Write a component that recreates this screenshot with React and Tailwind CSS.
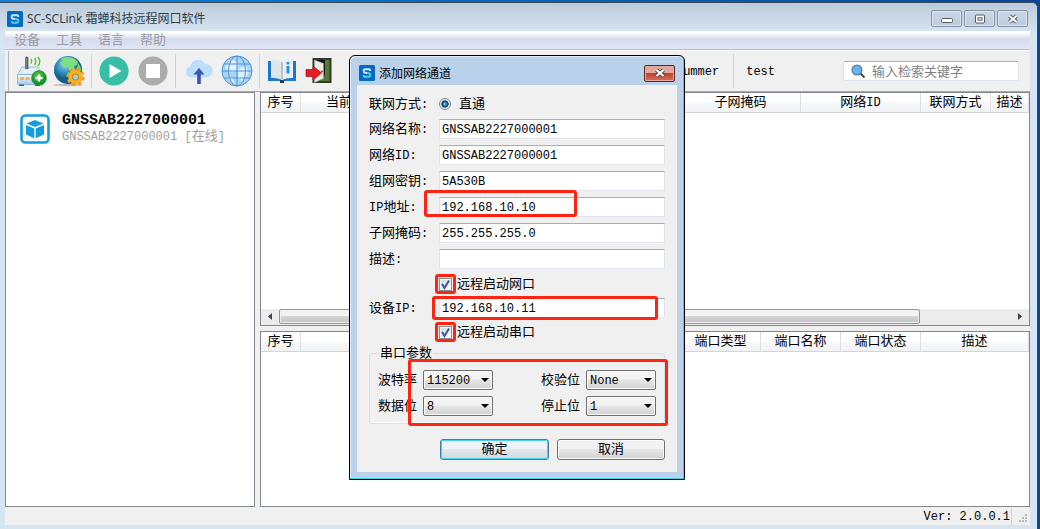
import React from "react";

const Mixed = ({ children }) =>
  String(children)
    .split(/([\x20-\x7e]+)/)
    .filter(Boolean)
    .map((part, i) =>
      /^[\x20-\x7e]+$/.test(part) ? (
        <span key={i} className="text-[12px]">{part}</span>
      ) : (
        part
      )
    );

const AppLogo = () => (
  <svg viewBox="0 0 16 16" className="h-4 w-4 shrink-0" aria-hidden="true">
    <rect width="16" height="16" rx="1.5" fill="#0568c4" />
    <path d="M11.300 6V5.400Q11.300 4.200 10 4.200H6Q4.700 4.200 4.700 5.400v1Q4.700 7.500 6 7.700L8 8" fill="none" stroke="#c9ecfa" strokeWidth="1.900" />
    <path d="M8 8l2 .3q1.300.2 1.300 1.300v1q0 1.200-1.300 1.200H6q-1.300 0-1.300-1.200V10" fill="none" stroke="#56cfdc" strokeWidth="1.900" />
  </svg>
);

const RouterIcon = () => (
  <svg viewBox="0 0 31 32" className="h-8 w-[31px]" aria-hidden="true">
    <defs>
      <linearGradient id="rt" x1="0" y1="0" x2="0" y2="1">
        <stop offset="0" stopColor="#f4f9fe" />
        <stop offset="1" stopColor="#a9c9e9" />
      </linearGradient>
      <radialGradient id="plus" cx=".45" cy=".35">
        <stop offset="0" stopColor="#64cf4b" />
        <stop offset="1" stopColor="#149129" />
      </radialGradient>
    </defs>
    <path d="M6 12h16l4 8H1.5z" fill="#d8e8f6" stroke="#8fb4d8" strokeWidth=".8" />
    <path d="M8 14.5h12M7 17h14" stroke="#fff" strokeWidth="1.2" />
    <path d="M1.5 19.5h25v9q0 1-1 1h-23q-1 0-1-1z" fill="url(#rt)" stroke="#7fa9d2" strokeWidth=".8" />
    <path d="M4 22h4v3H4zM9.5 22h4v3h-4z" fill="#f7b24a" />
    <path d="M3 29.5h5v1.5H3zM19 29.5h5v1.5h-5z" fill="#44678c" />
    <path d="M9 3q0-1.5 1.7-1.5T12.400 3v11H9z" fill="#5c6068" />
    <path d="M10 3v10" stroke="#a3a8ae" strokeWidth=".8" />
    <path d="M15 4q1.400 2 0 4.500M18.500 3q2.500 3.500 0 7M22 2q3.600 4.500 0 9" fill="none" stroke="#55c52d" strokeWidth="1.500" />
    <circle cx="23" cy="23" r="7.300" fill="url(#plus)" stroke="#148a26" strokeWidth=".8" />
    <path d="M23 19.500v7M19.500 23h7" stroke="#fff" strokeWidth="2.400" />
  </svg>
);

const GlobeGearIcon = () => (
  <svg viewBox="0 0 32 32" className="h-8 w-8" aria-hidden="true">
    <defs>
      <radialGradient id="gl" cx=".4" cy=".3">
        <stop offset="0" stopColor="#8fd5f0" />
        <stop offset=".6" stopColor="#328fbd" />
        <stop offset="1" stopColor="#155d8b" />
      </radialGradient>
    </defs>
    <ellipse cx="15" cy="30" rx="15" ry="1.200" fill="#bcbcbc" />
    <circle cx="15" cy="15" r="14" fill="url(#gl)" />
    <path d="M8 4q7-4 14 0l3 3-1 3-3 1 1 4-3 3-3-3-1-3-3 1-4-3-1-3 3-1z" fill="#7fe07f" />
    <path d="M25 8q3 3 3 8l-2 1-2-4zM15 17l4 2-1 3-3-2z" fill="#6fd56f" />
    <circle cx="22.500" cy="22" r="7.600" fill="none" stroke="#f09a10" strokeWidth="3" strokeDasharray="3.200 2.770" />
    <circle cx="22.500" cy="22" r="5.200" fill="none" stroke="#fbb01f" strokeWidth="4" />
    <circle cx="22.500" cy="22" r="3" fill="#a8d2c0" stroke="#d57b05" strokeWidth=".7" />
  </svg>
);

const PlayIcon = () => (
  <svg viewBox="0 0 30 30" className="h-[30px] w-[30px]" aria-hidden="true">
    <circle cx="15" cy="15" r="14.600" fill="#36bea6" />
    <path d="M10.500 8v14L22.500 15z" fill="#fff" />
  </svg>
);

const StopIcon = () => (
  <svg viewBox="0 0 30 30" className="h-[30px] w-[30px]" aria-hidden="true">
    <circle cx="15" cy="15" r="14.600" fill="#acacac" />
    <path d="M8 8h14v14H8z" fill="#fff" />
  </svg>
);

const CloudIcon = () => (
  <svg viewBox="0 0 28 28" className="h-7 w-7" aria-hidden="true">
    <path d="M6 20.500a5.600 5.600 0 0 1-.6-11A8 8 0 0 1 20.500 7.500a5.800 5.800 0 0 1 1.500 13z" fill="#bbdefb" />
    <path d="M14 11l5.500 6.500h-3.700V27h-3.600v-9.500H8.500z" fill="#3f51b5" />
  </svg>
);

const NetIcon = () => (
  <svg viewBox="0 0 32 32" className="h-8 w-8" aria-hidden="true">
    <circle cx="16" cy="16" r="15" fill="#a9d5f5" />
    <path d="M4 11l8-6 6 4-3 7-7 2zM17 14l8-3 3 7-6 8-5-2zM5 22l7 1 2 6z" fill="#dff1fd" />
    <g fill="none" stroke="#4a92d6" strokeWidth="1">
      <circle cx="16" cy="16" r="15" />
      <ellipse cx="16" cy="16" rx="8.500" ry="15" />
      <path d="M16 1v30M1 16h30M3 9h26M3 23h26" />
    </g>
  </svg>
);

const BookIcon = () => (
  <svg viewBox="0 0 30 26" className="h-[26px] w-[30px]" aria-hidden="true">
    <path d="M1 3h3v17h22V3h3v20H17.500q-2.500 2-5 0H1z" fill="#1976d2" />
    <path d="M4.500 1.500Q11 1 15 4v18q-5-2.500-10.500-2z" fill="#dfe6ea" />
    <path d="M25.500 1.500Q19 1 15 4v18q5-2.500 10.500-2z" fill="#eceff1" />
    <path d="M14 4h2v17h-2z" fill="#b9c4ca" />
    <path d="M13 22h4v3h-4z" fill="#263c4e" />
    <path d="M19.500 4h3v2.500h-3zM19.500 8h3v7.500h-3z" fill="#2493e8" />
  </svg>
);

const ExitIcon = () => (
  <svg viewBox="0 0 30 28" className="h-7 w-[30px]" aria-hidden="true">
    <path d="M7.500 1h19v25h-19z" fill="#34382c" />
    <path d="M10 3h14v21H10z" fill="#111" />
    <path d="M20 3h4.500v21H13.500q6-2 6.500-8z" fill="#527b38" />
    <path d="M9.500 3l9 3.500v15l-9 4z" fill="#eceae2" stroke="#aaa" strokeWidth=".6" />
    <circle cx="17" cy="14.500" r="1" fill="#555" />
    <path d="M1 12.500h7V9l8.500 7L8 23v-3.500H1z" fill="#e51c23" stroke="#b40c12" strokeWidth=".7" />
  </svg>
);

const DeviceIcon = () => (
  <svg viewBox="0 0 30 30" className="h-[30px] w-[30px] shrink-0" aria-hidden="true">
    <rect x="1.500" y="1.500" width="27" height="27" rx="4" fill="#fff" stroke="#129edc" strokeWidth="2.600" />
    <path d="M15 6l8.500 3.500L15 13 6.500 9.500z" fill="#129edc" />
    <path d="M6 11l8.300 3.500v9.800L6 20.500zM24 11l-8.300 3.500v9.800L24 20.500z" fill="#129edc" />
  </svg>
);

const SearchIcon = () => (
  <svg viewBox="0 0 15 15" className="h-[15px] w-[15px] shrink-0" aria-hidden="true">
    <path d="M9.500 9.500l4 4" stroke="#37474f" strokeWidth="2" />
    <circle cx="6" cy="6" r="4.900" fill="#64b5f6" stroke="#5c7f99" strokeWidth="1.300" />
  </svg>
);

const ToolButton = ({ label, width, children }) => (
  <button type="button" aria-label={label} className={`flex shrink-0 items-center justify-center ${width}`}>
    {children}
  </button>
);

const Separator = () => <div className="h-[34px] w-px shrink-0 bg-[#cfcfcf]" />;

const WindowButton = ({ label, children }) => (
  <button
    type="button"
    aria-label={label}
    className="flex h-[17px] w-[31px] items-center justify-center rounded-[2px] border border-[#8391a5] bg-linear-to-b from-[#cbd8e6] to-[#bccbdc] shadow-[inset_0_0_0_1px_#dbe6f1]"
  >
    {children}
  </button>
);

const Th = ({ children, align = "text-center" }) => (
  <th className={`h-5 border-r border-b border-[#dcdee2] border-b-[#d5d5d5] bg-linear-to-b from-white from-50% via-[#f7f8fa] via-50% to-[#f1f2f4] px-0 pt-px pb-0 font-normal leading-[18px] whitespace-nowrap ${align}`}>
    <Mixed>{children}</Mixed>
  </th>
);

const RedBox = ({ place }) => (
  <div className={`pointer-events-none absolute rounded-[3px] border-3 border-[#ff2312] ${place}`} />
);

const fieldClass =
  "h-5 w-full rounded-[1px] border border-[#e0e4ec] border-t-[#abadb3] bg-white px-[2px] pt-px text-[12px] leading-[18px] text-black outline-none";

const TextRow = ({ id, label, value, height = "h-[26px]", children }) => (
  <div className={`flex items-center ${height}`}>
    <label htmlFor={id} className="w-[70px] shrink-0 pt-[2px]"><Mixed>{label}</Mixed></label>
    <div className="relative flex flex-1 items-center">
      <input id={id} type="text" defaultValue={value} className={fieldClass} />
      {children}
    </div>
  </div>
);

const CheckRow = ({ id, label, box }) => (
  <div className="flex h-6 items-center pl-[70px]">
    <div className="relative flex h-[13px] w-[13px]">
      <input
        id={id}
        type="checkbox"
        defaultChecked
        className="peer h-[13px] w-[13px] appearance-none border border-[#8e8f8f] bg-linear-to-br from-[#cfd6e2] to-white shadow-[inset_0_0_0_1px_#f4f4f4]"
      />
      <svg viewBox="0 0 13 13" className="pointer-events-none absolute inset-0 hidden h-[13px] w-[13px] peer-checked:block" aria-hidden="true">
        <path d="M3 6l2.500 4L10 2.500" fill="none" stroke="#3a5599" strokeWidth="2" />
      </svg>
      <RedBox place={box} />
    </div>
    <label htmlFor={id} className="pt-px pl-[5px]">{label}</label>
  </div>
);

const SelectField = ({ id, label, options }) => (
  <div className="flex h-5 items-center">
    <label htmlFor={id} className="w-[45px] pt-[2px]">{label}</label>
    <div className="relative flex">
      <select
        id={id}
        className="h-5 w-[70px] appearance-none rounded-[2px] border border-[#707070] bg-linear-to-b from-[#f3f3f3] from-45% via-[#e6e6e6] via-50% to-[#d2d2d2] pt-px pl-[3px] text-[12px] leading-[18px] shadow-[inset_0_0_0_1px_#fafafa] outline-none"
      >
        {options.map((o) => <option key={o}>{o}</option>)}
      </select>
      <svg viewBox="0 0 8 4" className="pointer-events-none absolute top-2 right-1 h-1 w-2" aria-hidden="true">
        <path d="M0 0h8L4 4z" />
      </svg>
    </div>
  </div>
);

const AddChannelDialog = () => (
  <div
    role="dialog"
    aria-label="添加网络通道"
    className="absolute top-[55px] left-[349px] w-[336px] rounded-t-[6px] border border-black bg-[#b9d1ea] px-[7px] pb-[7px] shadow-[inset_-1px_-1px_0_#3fd6ec,inset_1px_1px_0_#e4eef8]"
  >
    <div className="flex h-[29px] items-center pt-[5px] pl-[2px]">
      <AppLogo />
      <div className="pt-px pl-1 font-['Noto_Sans','Noto_Sans_CJK_SC',sans-serif] text-[12px]">添加网络通道</div>
      <button
        type="button"
        aria-label="关闭"
        className="ml-auto mr-[2px] flex h-[17px] w-[31px] items-center justify-center rounded-[2px] border border-[#5b2622] bg-linear-to-b from-[#e0a79c] from-45% via-[#bf4030] via-50% to-[#d4705c] shadow-[inset_0_0_0_1px_#e5a99e]"
      >
        <svg viewBox="0 0 12 10" className="h-[10px] w-3" aria-hidden="true">
          <path d="M2.500 2l7 6M9.500 2l-7 6" stroke="#53413f" strokeWidth="4" />
          <path d="M2.500 2l7 6M9.500 2l-7 6" stroke="#fff" strokeWidth="2.200" />
        </svg>
      </button>
    </div>
    <form className="bg-[#f0f0f0] px-3 pt-[7px] pb-3" onSubmit={(e) => e.preventDefault()}>
      <div className="flex h-6 items-center">
        <div className="w-[70px] pt-[2px]"><Mixed>联网方式:</Mixed></div>
        <input
          id="direct"
          type="radio"
          name="mode"
          defaultChecked
          className="h-3 w-3 appearance-none rounded-full border border-[#8b8e91] bg-[radial-gradient(circle_at_50%_50%,#7fd5f5_0,#1d80b5_25%,#0c3352_46%,#e8e8e8_56%)]"
        />
        <label htmlFor="direct" className="pt-[2px] pl-2">直通</label>
      </div>
      <TextRow id="name" label="网络名称:" value="GNSSAB2227000001" />
      <TextRow id="netid" label="网络ID:" value="GNSSAB2227000001" />
      <TextRow id="key" label="组网密钥:" value="5A530B" />
      <TextRow id="ip" label="IP地址:" value="192.168.10.10">
        <RedBox place="-top-[7px] -left-[15px] h-[27px] w-[153px]" />
      </TextRow>
      <TextRow id="mask" label="子网掩码:" value="255.255.255.0" />
      <TextRow id="desc" label="描述:" value="" />
      <CheckRow id="rnet" label="远程启动网口" box="-top-1 -left-1 h-5 w-[21px]" />
      <TextRow id="devip" label="设备IP:" value="192.168.10.11" height="h-6">
        <RedBox place="-top-[2px] -left-[7px] h-6 w-[226px]" />
      </TextRow>
      <CheckRow id="rser" label="远程启动串口" box="-top-1 -left-1 h-5 w-[21px]" />
      <fieldset className="mt-px rounded-[3px] border border-[#d5dfe5] px-2 pb-[7px] shadow-[inset_0_-1px_0_#fff]">
        <legend className="ml-[1px] h-4 px-px leading-[18px]">串口参数</legend>
        <div className="relative flex flex-col gap-[6px] pt-[9px]">
          <div className="flex justify-between">
            <SelectField id="baud" label="波特率" options={["115200", "9600"]} />
            <SelectField id="parity" label="校验位" options={["None", "Odd", "Even"]} />
          </div>
          <div className="flex justify-between">
            <SelectField id="data" label="数据位" options={["8", "7"]} />
            <SelectField id="stop" label="停止位" options={["1", "2"]} />
          </div>
          <RedBox place="-top-[2px] left-[30px] h-[67px] w-[260px]" />
        </div>
      </fieldset>
      <div className="mt-[15px] flex justify-end gap-2">
        <button type="submit" className="h-[21px] w-[109px] rounded-[3px] border border-[#3c7fb1] bg-linear-to-b from-[#f0f4f6] from-45% via-[#e2e8eb] via-50% to-[#d0d9dd] pt-px leading-[18px] shadow-[inset_0_0_0_1px_#48d0f5]">确定</button>
        <button type="button" className="h-[21px] w-[108px] rounded-[3px] border border-[#707070] bg-linear-to-b from-[#f2f2f2] from-45% via-[#e6e6e6] via-50% to-[#d1d1d1] pt-px leading-[18px] shadow-[inset_0_0_0_1px_#fafafa]">取消</button>
      </div>
    </form>
  </div>
);

export default function App() {
  return (
    <div className="relative flex min-h-screen flex-col bg-linear-to-r from-[#0d84dc] to-[#06479b] pt-[2px] pr-[2px] font-['Liberation_Mono','Noto_Sans_CJK_SC',monospace] text-[13px] leading-[18px] text-black">
      <div className="flex flex-1 flex-col rounded-tr-[6px] border-t border-r border-[#3b4856] bg-[#d7e4f2] pb-1">
        <header className="flex h-7 items-center rounded-tr-[5px] bg-linear-to-b from-[#bccbda] to-[#d5e2f0] pt-[3px] pr-[9px] pl-[7px]">
          <AppLogo />
          <h1 className="pt-px pl-1 font-['Noto_Sans','Noto_Sans_CJK_SC',sans-serif] text-[12px] text-[#333c46]">SC-SCLink 霜蝉科技远程网口软件</h1>
          <div className="ml-auto flex gap-[2px]">
            <WindowButton label="最小化">
              <svg viewBox="0 0 12 10" className="h-[10px] w-3" aria-hidden="true">
                <rect x=".5" y="4.500" width="11" height="4" rx="1" fill="#fff" stroke="#555a66" />
              </svg>
            </WindowButton>
            <WindowButton label="最大化">
              <svg viewBox="0 0 12 10" className="h-[10px] w-3" aria-hidden="true">
                <rect x="1.500" y="1" width="9" height="8" rx="1" fill="#fff" stroke="#555a66" />
                <rect x="4" y="3.800" width="4" height="2.400" fill="#fff" stroke="#555a66" />
              </svg>
            </WindowButton>
            <WindowButton label="关闭">
              <svg viewBox="0 0 12 10" className="h-[10px] w-3" aria-hidden="true">
                <path d="M2.500 2l7 6M9.500 2l-7 6" stroke="#555a66" strokeWidth="4" />
                <path d="M2.500 2l7 6M9.500 2l-7 6" stroke="#fff" strokeWidth="2" />
              </svg>
            </WindowButton>
          </div>
        </header>

        <div className="mr-[7px] ml-[5px] flex flex-1 flex-col bg-[#f0f0f0]">
          <nav className="flex h-[19px] gap-4 border-b border-[#b6bccc] bg-linear-to-b from-white from-10% via-[#d6dbee] via-45% to-[#e1e6f6] pl-[9px] text-[#9a9a9e]">
            {["设备", "工具", "语言", "帮助"].map((m) => (
              <button key={m} type="button" className="pt-px leading-[18px]">{m}</button>
            ))}
          </nav>

          <div className="flex h-[42px] items-center border-t border-b border-t-white border-b-[#a9a9ad] pr-[11px] pl-[3px]">
            <div className="h-full w-px bg-[#b4b4b4]" />
            <div className="w-[7px]" />
            <ToolButton label="添加设备" width="w-[31px]"><RouterIcon /></ToolButton>
            <div className="w-[6px]" />
            <ToolButton label="网络设置" width="w-8"><GlobeGearIcon /></ToolButton>
            <div className="w-[6px]" />
            <Separator />
            <div className="w-[7px]" />
            <ToolButton label="启动" width="w-[30px]"><PlayIcon /></ToolButton>
            <div className="w-[9px]" />
            <ToolButton label="停止" width="w-[30px]"><StopIcon /></ToolButton>
            <div className="w-[7px]" />
            <Separator />
            <div className="w-[9px]" />
            <ToolButton label="上传" width="w-7"><CloudIcon /></ToolButton>
            <div className="w-2" />
            <ToolButton label="网络" width="w-8"><NetIcon /></ToolButton>
            <div className="w-[6px]" />
            <Separator />
            <div className="w-[7px]" />
            <ToolButton label="说明" width="w-[30px]"><BookIcon /></ToolButton>
            <div className="w-2" />
            <ToolButton label="退出" width="w-[30px]"><ExitIcon /></ToolButton>
            <div className="ml-auto flex items-center text-[12px]">
              <span className="pt-[2px] pr-[14px]">summer</span>
              <Separator />
              <span className="pt-[2px] pl-3">test</span>
            </div>
            <div className="ml-[68px] flex h-5 w-[176px] items-center rounded-[2px] border border-[#dfe3ea] border-t-[#abadb3] bg-white pl-[7px]">
              <SearchIcon />
              <input
                type="text"
                aria-label="输入检索关键字"
                placeholder="输入检索关键字"
                className="h-[18px] min-w-0 flex-1 bg-transparent pt-[3px] pl-[6px] leading-[15px] outline-none placeholder:text-[#808080]"
              />
            </div>
          </div>

          <main className="flex flex-1 gap-[5px]">
            <aside className="w-[250px] shrink-0 border border-[#828790] bg-white pt-5 pl-[14px]">
              <div className="flex items-center gap-3">
                <DeviceIcon />
                <div>
                  <div className="text-[15px] leading-4 font-bold">GNSSAB2227000001</div>
                  <div className="leading-4 text-[#a0a0a0]"><Mixed>GNSSAB2227000001 [在线]</Mixed></div>
                </div>
              </div>
            </aside>

            <div className="flex min-w-0 flex-1 flex-col gap-[5px]">
              <section className="flex flex-[234] basis-0 flex-col border border-[#828790] bg-white">
                <table className="w-full table-fixed border-separate border-spacing-0">
                  <colgroup>
                    <col className="w-10" />
                    <col />
                    <col className="w-[120px]" />
                    <col className="w-[120px]" />
                    <col className="w-[70px]" />
                    <col className="w-[38px]" />
                  </colgroup>
                  <thead>
                    <tr>
                      <Th>序号</Th>
                      <Th align="pl-[25px]! text-left">当前</Th>
                      <Th>子网掩码</Th>
                      <Th>网络ID</Th>
                      <Th>联网方式</Th>
                      <Th>描述</Th>
                    </tr>
                  </thead>
                </table>
                <div className="mt-auto flex h-4 items-center bg-[#ececec]">
                  <button type="button" aria-label="向左滚动" className="flex h-4 w-[18px] items-center justify-center">
                    <svg viewBox="0 0 4 7" className="h-[7px] w-1" aria-hidden="true"><path d="M4 0v7L0 3.500z" fill="#444" /></svg>
                  </button>
                  <div className="h-full flex-1">
                    <div className="h-[15px] w-7/8 rounded-[2px] border border-[#979797] bg-linear-to-b from-[#f3f3f3] from-45% via-[#d6d6d8] via-50% to-[#c3c3c6] shadow-[inset_0_0_0_1px_#efefef]" />
                  </div>
                  <button type="button" aria-label="向右滚动" className="flex h-4 w-[18px] items-center justify-center">
                    <svg viewBox="0 0 4 7" className="h-[7px] w-1" aria-hidden="true"><path d="M0 0v7l4-3.500z" fill="#444" /></svg>
                  </button>
                </div>
              </section>

              <section className="flex-[176] basis-0 border border-[#828790] bg-white">
                <table className="w-full table-fixed border-separate border-spacing-0">
                  <colgroup>
                    <col className="w-10" />
                    <col />
                    <col className="w-20" />
                    <col className="w-20" />
                    <col className="w-20" />
                    <col className="w-[108px]" />
                  </colgroup>
                  <thead>
                    <tr>
                      <Th>序号</Th>
                      <Th>{""}</Th>
                      <Th>端口类型</Th>
                      <Th>端口名称</Th>
                      <Th>端口状态</Th>
                      <Th>描述</Th>
                    </tr>
                  </thead>
                </table>
              </section>
            </div>
          </main>

          <footer className="flex h-[18px] items-center justify-end text-[12px]">
            <span className="border-r border-[#d0d0d0] pt-px pr-px leading-4">Ver: 2.0.0.1</span>
            <svg viewBox="0 0 10 10" className="mt-1 mr-[2px] ml-[6px] h-[10px] w-[10px]" aria-hidden="true">
              <path d="M7 1h2v2H7zM4 4h2v2H4zM7 4h2v2H7zM1 7h2v2H1zM4 7h2v2H4zM7 7h2v2H7z" fill="#bdbdbd" />
            </svg>
          </footer>
        </div>
      </div>
      <AddChannelDialog />
    </div>
  );
}
